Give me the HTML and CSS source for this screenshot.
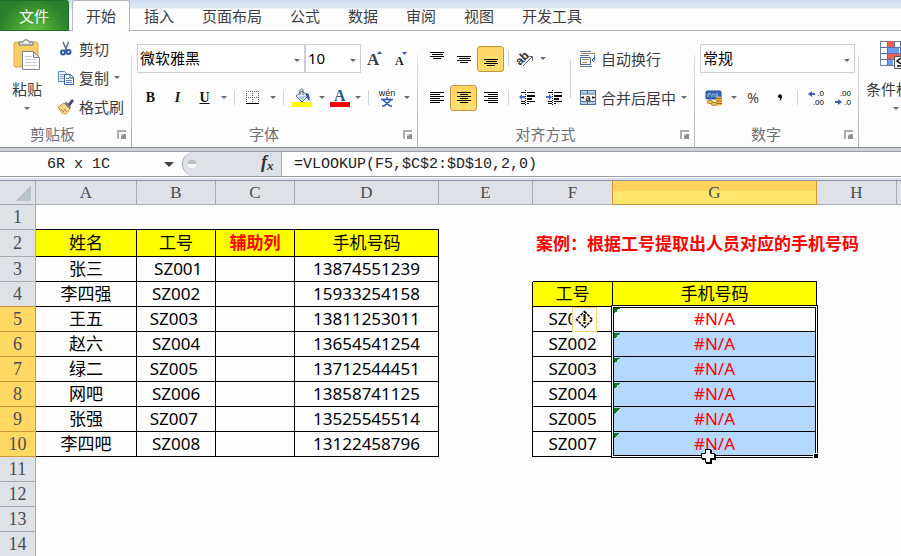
FILE: index.html
```html
<!DOCTYPE html>
<html lang="zh-CN">
<head>
<meta charset="utf-8">
<title>工作簿</title>
<link rel="stylesheet" href="styles.css">
</head>
<body>
<nav class="tabs">
  <button class="tab tab-file">文件</button>
  <button class="tab tab-active">开始</button>
  <button class="tab">插入</button>
  <button class="tab">页面布局</button>
  <button class="tab">公式</button>
  <button class="tab">数据</button>
  <button class="tab">审阅</button>
  <button class="tab">视图</button>
  <button class="tab">开发工具</button>
</nav>

<div class="ribbon">
  <section class="group g-clip">
    <div class="group-body">
      <button class="big">
        <svg width="28" height="32" viewBox="0 0 28 32"><rect x="1" y="3" width="24" height="25" rx="2" fill="#f7cf62" stroke="#dba94a"/><path d="M6 6V3h4c0-3 6-3 6 0h4v3z" fill="#d6dade" stroke="#6d7580"/><path d="M11 3.500h4" stroke="#fff" stroke-width="2"/><path d="M9.500 12.500h11l6 6v12h-17z" fill="#fff" stroke="#7a8696"/><path d="M20.500 12.500v6h6z" fill="#dde3ea" stroke="#7a8696"/><path d="M12 17.500h7M12 20.500h11M12 23.500h12M12 26.500h12" stroke="#c4ccd6"/></svg>
        <span>粘贴</span>
        <i class="arrow"></i>
      </button>
      <div class="clip-list">
        <button class="cmd"><svg width="16" height="16" viewBox="0 0 16 16"><path d="M5 1l4 9M10.500 1L7 10" stroke="#5b6b80" stroke-width="1.500" fill="none"/><circle cx="5" cy="11.500" r="2" fill="#fff" stroke="#2c5aa8" stroke-width="2"/><circle cx="10.500" cy="11" r="2" fill="#fff" stroke="#2c5aa8" stroke-width="2"/></svg>剪切</button>
        <button class="cmd"><svg width="16" height="16" viewBox="0 0 16 16"><path d="M.5 1.500h6l3 3v7h-9z" fill="#e8f0fb" stroke="#5f86bd"/><path d="M2 4.500h4M2 6.500h5M2 8.500h5" stroke="#7fa3d6"/><path d="M6.500 4.500h6l3 3v7h-9z" fill="#fff" stroke="#2f5fa8"/><path d="M12 4.500v3.500h3.500" fill="none" stroke="#2f5fa8"/><path d="M8 8.500h3M8 10.500h6M8 12.500h6" stroke="#5585cc"/></svg>复制<i class="arrow"></i></button>
        <button class="cmd"><svg width="16" height="16" viewBox="0 0 16 16"><path d="M0 8l6-4 6 6-4 5-4-1z" fill="#f6d68c" stroke="#d39b45"/><path d="M3 10l3 3M6 10l3 3" stroke="#b9772c"/><path d="M6 4l3-1 4 5-1 2z" fill="#71788a"/><path d="M10 5l4-5 2 2-4 5z" fill="#4b4463"/></svg>格式刷</button>
      </div>
    </div>
    <footer class="caption"><span>剪贴板</span><button class="launch" aria-label="剪贴板设置"></button></footer>
  </section>

  <section class="group g-font">
    <div class="group-body rows">
      <div class="row">
        <label class="combo combo-font"><select aria-label="字体"><option>微软雅黑</option></select></label>
        <label class="combo combo-size"><select aria-label="字号"><option>10</option></select></label>
        <button class="tool w28" aria-label="增大字号"><svg width="16" height="18" viewBox="0 0 16 18"><text x="0" y="15" class="serif-bold" font-size="17" fill="#3b3d42">A</text><path d="M10 4l2.500-3L15 4z" fill="#2c5aa8"/></svg></button>
        <button class="tool w24" aria-label="减小字号"><svg width="16" height="18" viewBox="0 0 16 18"><text x="2" y="15" class="serif-bold" font-size="12" fill="#202124">A</text><path d="M9 2h5l-2.500 3z" fill="#2c5aa8"/></svg></button>
      </div>
      <div class="row">
        <button class="tool w27 letter bold">B</button>
        <button class="tool w27 letter italic">I</button>
        <button class="tool w27 letter under">U</button>
        <button class="drop" aria-label="下划线选项"><i class="arrow"></i></button>
        <i class="sep"></i>
        <button class="tool w28" aria-label="边框"><svg width="14" height="14" viewBox="0 0 14 14"><path d="M0 .5h13M0 6.500h13M.5 0v12M6.500 0v12M12.500 0v12" stroke="#666" stroke-dasharray="1 1"/><path d="M0 12.500h13" stroke="#000"/></svg></button>
        <button class="drop" aria-label="边框选项"><i class="arrow"></i></button>
        <i class="sep"></i>
        <button class="tool w28" aria-label="填充颜色"><svg width="20" height="18" viewBox="0 0 20 18"><path d="M4 7l6-5 6 5-6 6z" fill="#e4ebf5" stroke="#4d6690"/><path d="M6 8l4 3 4-4z" fill="#a8bedd"/><path d="M8 6V1.500c0-2 3-2 3 0V6" fill="none" stroke="#555c68"/><path d="M14 4c3 0 4 3 3.500 8-2-1-2-4-3.500-5z" fill="#2c5aa8"/><rect y="13" width="20" height="5" fill="#ff0"/></svg></button>
        <button class="drop" aria-label="填充选项"><i class="arrow"></i></button>
        <button class="tool w24" aria-label="字体颜色"><svg width="20" height="18" viewBox="0 0 20 18"><text x="4" y="12" class="serif-bold" font-size="16" fill="#35588f">A</text><rect y="13" width="20" height="5" fill="#f00"/></svg></button>
        <button class="drop" aria-label="字体颜色选项"><i class="arrow"></i></button>
        <i class="sep"></i>
        <button class="tool w28" aria-label="拼音"><svg width="18" height="18" viewBox="0 0 18 18"><text x="9" y="7" text-anchor="middle" class="sans" font-size="9" fill="#222">wén</text><path d="M3 10.500h12M9 8v2M5 11l7 6h2M13 11l-7 6H4" stroke="#2855b5" stroke-width="1.500" fill="none"/></svg></button>
        <button class="drop" aria-label="拼音选项"><i class="arrow"></i></button>
      </div>
    </div>
    <footer class="caption"><span>字体</span><button class="launch" aria-label="字体设置"></button></footer>
  </section>

  <section class="group g-align">
    <div class="group-body">
      <div class="rows align-left">
        <div class="row">
          <button class="tool w27" aria-label="顶端对齐"><svg width="14" height="16" viewBox="0 0 14 16"><path d="M0 1.500h14M2 3.500h11M0 5.500h14M3 7.500h8" stroke="#000"/></svg></button>
          <button class="tool w27" aria-label="垂直居中"><svg width="14" height="16" viewBox="0 0 14 16"><path d="M0 5.500h14M2 7.500h11M0 9.500h14M3 11.500h8" stroke="#000"/></svg></button>
          <button class="tool w27 on" aria-label="底端对齐"><svg width="14" height="16" viewBox="0 0 14 16"><path d="M0 8.500h14M2 10.500h11M0 12.500h14M3 14.500h8" stroke="#000"/></svg></button>
          <i class="sep"></i>
          <button class="tool w24" aria-label="方向"><svg width="18" height="16" viewBox="0 0 18 16"><text x="1" y="12" transform="rotate(-45 6 10)" class="sans-bold" font-size="12" fill="#333">ab</text><path d="M7 15l9-9M12 5.500h4.500V10" stroke="#666070" fill="none"/></svg></button>
          <button class="drop" aria-label="方向选项"><i class="arrow"></i></button>
        </div>
        <div class="row">
          <button class="tool w27" aria-label="左对齐"><svg width="14" height="12" viewBox="0 0 14 12"><path d="M0 .5h14M0 2.500h10M0 4.500h14M0 6.500h10M0 8.500h14M0 10.500h10" stroke="#000"/></svg></button>
          <button class="tool w27 on" aria-label="居中"><svg width="14" height="12" viewBox="0 0 14 12"><path d="M0 .5h14M3 2.500h8M0 4.500h14M3 6.500h8M0 8.500h14M3 10.500h8" stroke="#000"/></svg></button>
          <button class="tool w27" aria-label="右对齐"><svg width="14" height="12" viewBox="0 0 14 12"><path d="M0 .5h14M4 2.500h10M0 4.500h14M4 6.500h10M0 8.500h14M4 10.500h10" stroke="#000"/></svg></button>
          <i class="sep"></i>
          <button class="tool w27" aria-label="减少缩进"><svg width="16" height="16" viewBox="0 0 16 16"><path d="M2 2.500h4M8 2.500h8M2 11.500h4M8 11.500h8M2 13.500h4M8 13.500h2" stroke="#000"/><path d="M8 6h8M8 9h5" stroke="#000" stroke-width="2"/><path d="M6.500 0v16" stroke="#000" stroke-dasharray="1 1"/><path d="M0 7l3-3v2h3v2H3v2z" fill="#3f72c4"/></svg></button>
          <button class="tool w27" aria-label="增加缩进"><svg width="16" height="16" viewBox="0 0 16 16"><path d="M2 2.500h4M8 2.500h8M2 11.500h4M8 11.500h8M2 13.500h4M8 13.500h2" stroke="#000"/><path d="M8 6h8M8 9h5" stroke="#000" stroke-width="2"/><path d="M6.500 0v16" stroke="#000" stroke-dasharray="1 1"/><path d="M6 7L3 4v2H0v2h3v2z" fill="#3f72c4"/></svg></button>
        </div>
      </div>
      <i class="tall-sep"></i>
      <div class="rows">
        <button class="cmd row"><svg width="16" height="16" viewBox="0 0 16 16"><path d="M0 .5h11M0 4.500h9M0 15.500h12" stroke="#607590"/><path d="M1 2.500h14" stroke="#a98149"/><rect x=".5" y="6.500" width="10" height="7" fill="#fff" stroke="#536b8e"/><path d="M2 8.500h7M2 11.500h5" stroke="#b3874b"/><path d="M14.500 4v5h-2M14 7l-2 2 2 2" fill="none" stroke="#3f68a8"/></svg>自动换行</button>
        <button class="cmd row"><svg width="16" height="16" viewBox="0 0 16 16"><rect x=".5" y=".5" width="15" height="14" fill="#b9d0ea" stroke="#4f6d99"/><path d="M7.500 0v15" stroke="#4f6d99"/><rect x="1" y="4" width="14" height="7" fill="#fff"/><path d="M0 4h16M0 11.500h16" stroke="#4f6d99"/><text x="8" y="11" text-anchor="middle" class="sans-bold" font-size="9" fill="#111">a</text><path d="M1 7.500h3M12 7.500h3M3 6v3M13 6v3" stroke="#222"/></svg>合并后居中<i class="arrow"></i></button>
      </div>
    </div>
    <footer class="caption"><span>对齐方式</span><button class="launch" aria-label="对齐设置"></button></footer>
  </section>

  <section class="group g-num">
    <div class="group-body rows">
      <div class="row">
        <label class="combo combo-num"><select aria-label="数字格式"><option>常规</option></select></label>
      </div>
      <div class="row">
        <button class="tool w28" aria-label="会计数字格式"><svg width="18" height="16" viewBox="0 0 18 16"><rect x="1" y="1" width="15" height="8" rx="1" fill="#3968b8" stroke="#244b92"/><path d="M3 7V4h3M7 7c-1-4 4-4 3 0M12 3v4h2" stroke="#b6cef2" fill="none"/><path d="M11 8c2-2 6-1 6 0v6c0 2-6 2-6 0z" fill="#efb73f"/><path d="M11 8.500h6M11 11h6M11 13.500h6" stroke="#9d6818"/><ellipse cx="5" cy="12" rx="3" ry="1.500" fill="#f2c45b" stroke="#b88127"/><ellipse cx="9" cy="14" rx="3" ry="1.500" fill="#f2c45b" stroke="#b88127"/></svg></button>
        <button class="drop" aria-label="货币选项"><i class="arrow"></i></button>
        <button class="tool w26 percent">%</button>
        <button class="tool w27" aria-label="千位分隔"><svg width="8" height="10" viewBox="0 0 8 10"><path d="M2 3.500a2 2 0 1 1 4-.5c0 3-1 4-3 5 1-1 1-2 1-3-1 0-2 0-2-1.500z" fill="#111"/></svg></button>
        <i class="sep"></i>
        <button class="tool w27" aria-label="增加小数位数"><svg width="16" height="18" viewBox="0 0 16 18"><text x="16" y="7" text-anchor="end" class="sans" font-size="8" fill="#000">.0</text><text x="16" y="16" text-anchor="end" class="sans" font-size="8" fill="#000">.00</text><path d="M0 5l4-3v2h3v2H4v2z" fill="#2f62bd"/></svg></button>
        <button class="tool w27" aria-label="减少小数位数"><svg width="16" height="18" viewBox="0 0 16 18"><text x="16" y="7" text-anchor="end" class="sans" font-size="8" fill="#000">.00</text><text x="16" y="16" text-anchor="end" class="sans" font-size="8" fill="#000">.0</text><path d="M7 13l-4-3v2H0v2h3v2z" fill="#2f62bd"/></svg></button>
      </div>
    </div>
    <footer class="caption"><span>数字</span><button class="launch" aria-label="数字设置"></button></footer>
  </section>

  <section class="group g-style">
    <div class="group-body">
      <button class="big">
        <svg width="32" height="32" viewBox="0 0 32 32"><path d="M.5 2.500h30v24H.5z" fill="#fff" stroke="#6d7fa8"/><path d="M7 2h7v6H7zM7 14h14v6H7z" fill="#f4604c"/><path d="M7 8h12v6H7zM7 20h6v6H7z" fill="#6d9bf0"/><path d="M0 8.500h30M0 14.500h30M0 20.500h30M7.500 2v25M14.500 2v6M20.500 2v25" stroke="#5a6ea5"/><path d="M14.500 17.500h14v12h-14z" fill="#f2f3f5" stroke="#555"/><path d="M21 19l-4 3 4 3M17 27h5" fill="none" stroke="#111" stroke-width="1.500"/></svg>
        <span>条件格式</span>
        <i class="arrow"></i>
      </button>
    </div>
  </section>
</div>

<div class="formula-bar">
  <label class="name-box"><input class="mono" aria-label="名称框" value="6R x 1C"></label>
  <div class="fx-area">
    <i class="grip"></i>
    <button class="fx" aria-label="插入函数"><svg width="18" height="20" viewBox="0 0 18 20"><text x="3" y="14" class="serif-italic" font-size="18" fill="#333">f</text><text x="9" y="16" class="serif-italic" font-size="13" fill="#333">x</text></svg></button>
  </div>
  <input class="formula mono" aria-label="编辑栏" value="=VLOOKUP(F5,$C$2:$D$10,2,0)">
</div>

<table class="sheet">
  <colgroup><col class="c-head"><col class="c-a"><col class="c-b"><col class="c-b"><col class="c-d"><col class="c-e"><col class="c-f"><col class="c-g"><col class="c-f"><col></colgroup>
  <thead>
    <tr><th class="corner"></th><th>A</th><th>B</th><th>C</th><th>D</th><th>E</th><th>F</th><th class="sel">G</th><th>H</th><th class="last"></th></tr>
  </thead>
  <tbody>
    <tr><th>1</th><td class="u"></td><td class="u"></td><td class="u"></td><td class="u"></td><td></td><td></td><td></td><td></td><td></td></tr>
    <tr class="tall"><th>2</th><td class="b y">姓名</td><td class="b y">工号</td><td class="b y key">辅助列</td><td class="b y">手机号码</td><td></td><td class="title" colspan="4">案例<span class="colon">：</span>根据工号提取出人员对应的手机号码</td></tr>
    <tr><th>3</th><td class="b">张三</td><td class="b"> SZ001</td><td class="b"></td><td class="b">13874551239</td><td></td><td class="u"></td><td class="u"></td><td></td><td></td></tr>
    <tr><th class="pre">4</th><td class="b">李四强</td><td class="b">SZ002</td><td class="b"></td><td class="b">15933254158</td><td class="r"></td><td class="b y">工号</td><td class="b y">手机号码</td><td></td><td></td></tr>
    <tr><th class="sel">5</th><td class="b">王五</td><td class="b">SZ003 </td><td class="b"></td><td class="b">13811253011</td><td class="r"></td><td class="b anchor">SZ001<span class="tag"><svg width="19" height="19" viewBox="0 0 19 19"><path d="M9.500 1L18 9.500 9.500 18 1 9.500z" fill="#fff"/><path d="M6 6.500h7M4 8.500h11M4 10.500h11M6 12.500h7" stroke="#fdf08a"/><path d="M9.500 1.500l8 8-8 8-8-8z" fill="none" stroke="#000" stroke-width="1.500" stroke-dasharray="3 1"/><path d="M9.500 4v7M9.500 12v2" stroke="#000" stroke-width="2"/></svg></span></td><td class="b err anchor">#N/A<span class="selection"><i class="handle"></i></span></td><td></td><td></td></tr>
    <tr><th class="sel">6</th><td class="b">赵六</td><td class="b">SZ004</td><td class="b"></td><td class="b">13654541254</td><td class="r"></td><td class="b">SZ002</td><td class="b err picked">#N/A</td><td></td><td></td></tr>
    <tr><th class="sel">7</th><td class="b">绿二</td><td class="b">SZ005 </td><td class="b"></td><td class="b">13712544451</td><td class="r"></td><td class="b">SZ003</td><td class="b err picked">#N/A</td><td></td><td></td></tr>
    <tr><th class="sel">8</th><td class="b">网吧</td><td class="b">SZ006</td><td class="b"></td><td class="b">13858741125</td><td class="r"></td><td class="b">SZ004</td><td class="b err picked">#N/A</td><td></td><td></td></tr>
    <tr><th class="sel">9</th><td class="b">张强</td><td class="b">SZ007 </td><td class="b"></td><td class="b">13525545514</td><td class="r"></td><td class="b">SZ005</td><td class="b err picked">#N/A</td><td></td><td></td></tr>
    <tr><th class="sel">10</th><td class="b">李四吧</td><td class="b">SZ008</td><td class="b"></td><td class="b">13122458796</td><td class="r"></td><td class="b">SZ007</td><td class="b err picked anchor">#N/A<svg class="cursor" width="16" height="16" viewBox="0 0 16 16"><path d="M6 2h6v4h4v6h-4v4H6v-4H2V6h4z" fill="#000"/><path d="M5.500 1.500h5v4h4v5h-4v4h-5v-4h-4v-5h4z" fill="#fff" stroke="#000"/></svg></td><td></td><td></td></tr>
    <tr><th>11</th><td colspan="9"></td></tr>
    <tr><th>12</th><td colspan="9"></td></tr>
    <tr><th>13</th><td colspan="9"></td></tr>
    <tr><th>14</th><td colspan="9"></td></tr>
  </tbody>
</table>
</body>
</html>
```
FILE: styles.css
```css
* {
  box-sizing: border-box;
}

body {
  margin: 0;
  overflow: hidden;
  background: #fdfdfd;
  color: #3b3d42;
  font: 15px/20px "Noto Sans", "Noto Sans CJK SC", sans-serif;
}

button,
input,
select {
  margin: 0;
  padding: 0;
  border: 0;
  background: none;
  color: inherit;
  font: inherit;
}

svg {
  display: block;
  flex: none;
  overflow: visible;
}

.serif-bold {
  font-family: "Liberation Serif", serif;
  font-weight: bold;
}

.serif-italic {
  font-family: "Liberation Serif", serif;
  font-style: italic;
  font-weight: bold;
}

.sans {
  font-family: "Liberation Sans", sans-serif;
}

.sans-bold {
  font-family: "Liberation Sans", sans-serif;
  font-weight: bold;
}

/* Tabs */
.tabs {
  display: flex;
  height: 31px;
  background: linear-gradient(#c9d9ee 0, #dbe6f5 4px, #dbe6f5 8px, #fdfdfd 9px);
  box-shadow: inset 0 -1px #adb1b9;
}

.tab {
  padding: 0 14px;
  white-space: nowrap;
}

.tab-file {
  width: 69px;
  border: 1px solid #1f6e2c;
  border-left: 0;
  border-radius: 0 3px 0 0;
  background: radial-gradient(ellipse at 50% 110%, #6cc043 0, #3f9a30 45%, #2a7f2c 75%);
  color: #fff;
}

.tab-active {
  margin-left: 3px;
  border: 1px solid #b3b7c0;
  border-bottom: 0;
  border-radius: 3px 3px 0 0;
  padding: 0 13px;
  background: #fdfdfd;
}

/* Ribbon */
.ribbon {
  display: flex;
  height: 117px;
  border-bottom: 1px solid #8b8f94;
  overflow: hidden;
}

.group {
  display: flex;
  flex: none;
  flex-direction: column;
  padding-right: 1px;
  background: linear-gradient(#dcdfe4, #a4a8ae) right 24px / 1px 100% no-repeat;
}

.g-clip {
  width: 132px;
}

.g-font {
  width: 286px;
  padding-left: 5px;
}

.g-align {
  width: 277px;
  padding-left: 5px;
}

.g-num {
  width: 164px;
  padding-left: 5px;
}

.g-style {
  flex: 1 0 auto;
  padding-left: 7px;
  background: none;
}

.group-body {
  display: flex;
  flex: 1;
}

.rows {
  display: flex;
  flex-direction: column;
  gap: 10px;
  padding-top: 13px;
}

.row {
  display: flex;
  align-items: center;
  height: 29px;
}

.caption {
  position: relative;
  height: 24px;
  color: #6b6f76;
  line-height: 22px;
  text-align: center;
}

.caption span {
  padding-right: 26px;
}

.launch {
  position: absolute;
  right: 5px;
  top: 7px;
  width: 9px;
  height: 9px;
  border-top: 2px solid #a9adb3;
  border-left: 2px solid #a9adb3;
}

.launch::after {
  content: "";
  position: absolute;
  right: 0;
  bottom: 0;
  width: 5px;
  height: 5px;
  background: linear-gradient(135deg, #c4c7cb 30%, #8b8f96 30%);
}

.arrow {
  width: 0;
  height: 0;
  border: 3px solid transparent;
  border-top-color: #666a70;
  border-bottom: 0;
}

.big {
  display: flex;
  flex-direction: column;
  align-items: center;
  padding: 8px 0 0 12px;
  width: 42px;
  height: 91px;
}

.big svg {
  margin-bottom: 8px;
}

.big .arrow {
  margin-top: 8px;
}

.g-style .big {
  width: auto;
  padding: 8px 0 0;
  white-space: nowrap;
}

.clip-list {
  display: flex;
  flex-direction: column;
  padding: 3px 0 0 16px;
}

.cmd {
  display: flex;
  align-items: center;
  gap: 5px;
  height: 29px;
  white-space: nowrap;
}

.tall-sep {
  width: 1px;
  height: 38px;
  margin: 29px 9px 0 3px;
  background: #cdd3dc;
}

.combo {
  position: relative;
  height: 29px;
  border: 1px solid #cbced4;
  background: #fff;
}

.combo::after {
  content: "";
  position: absolute;
  right: 4px;
  top: 14px;
  border: 3px solid transparent;
  border-top-color: #666a70;
  border-bottom: 0;
}

.combo select {
  width: 100%;
  height: 27px;
  padding: 0 2px 2px;
  appearance: none;
  color: #000;
}

.combo-font {
  width: 168px;
}

.combo-size {
  width: 56px;
}

.combo-num {
  width: 155px;
}

.tool {
  display: flex;
  align-items: center;
  justify-content: center;
  height: 26px;
}

.w24 {
  width: 24px;
}

.w26 {
  width: 26px;
}

.w27 {
  width: 27px;
}

.w28 {
  width: 28px;
}

.on {
  border: 1px solid #c8913a;
  border-radius: 3px;
  background: linear-gradient(#fcd565, #ffdf6e);
}

.drop {
  display: flex;
  align-items: center;
  justify-content: center;
  width: 12px;
  height: 26px;
}

.sep {
  width: 1px;
  height: 15px;
  margin: 0 4px;
  background: #ced3da;
}

.letter {
  color: #111;
  font: bold 14px/20px "Liberation Serif", serif;
}

.italic {
  font-style: italic;
}

.under {
  text-decoration: underline;
}

.percent {
  font-size: 14px;
}

/* Formula bar */
.formula-bar {
  display: flex;
  height: 33px;
  padding-top: 1px;
  border-bottom: 1px solid #8f9399;
  background: linear-gradient(#cdd0d5 3px, #999da3 3px, #999da3 4px, #fdfdfd 4px, #fdfdfd 28px, #999da3 28px, #999da3 29px, #fdfdfd 29px, #fdfdfd 30px, #d9e3f3 30px);
}

.mono {
  color: #222;
  font-family: "Liberation Mono", monospace;
}

.name-box {
  position: relative;
  width: 182px;
  height: 24px;
  margin-top: 3px;
}

.name-box input {
  width: 100%;
  height: 24px;
  padding-left: 47px;
}

.name-box::after {
  content: "";
  position: absolute;
  right: 8px;
  top: 10px;
  border: 5px solid transparent;
  border-top-color: #3d4045;
  border-bottom: 0;
}

.fx-area {
  display: flex;
  align-items: center;
  justify-content: space-between;
  width: 100px;
  height: 24px;
  margin-top: 3px;
  padding: 0 5px;
  border: solid #a6aab0;
  border-width: 0 1px;
  border-radius: 12px 0 0 12px;
  background: #dee1e6;
}

.grip {
  width: 8px;
  height: 8px;
  border-radius: 3px;
  background: linear-gradient(#b7bbc1 50%, #fff 50%);
}

.formula {
  flex: 1;
  height: 24px;
  margin-top: 3px;
  padding-left: 12px;
}

/* Worksheet */
.sheet {
  width: 100%;
  table-layout: fixed;
  border-collapse: separate;
  border-spacing: 0;
  color: #000;
  font-size: 17px;
  line-height: 22px;
}

.c-head {
  width: 36px;
}

.c-a {
  width: 101px;
}

.c-b {
  width: 79px;
}

.c-d {
  width: 144px;
}

.c-e {
  width: 94px;
}

.c-f {
  width: 80px;
}

.c-g {
  width: 204px;
}

.sheet tr {
  height: 25px;
}

.sheet thead tr {
  height: 24px;
}

.sheet .tall {
  height: 27px;
}

.sheet th {
  padding: 0;
  border: solid #a6abb2;
  border-width: 0 1px 1px 0;
  background: #dee1e6;
  color: #4a4c51;
  font: 18px/22px "Liberation Serif", serif;
}

.sheet thead th {
  padding-top: 1px;
  font-size: 17px;
}

.sheet .last {
  border-right: 0;
}

.sheet .corner {
  background: linear-gradient(135deg, transparent 50%, #b9c4c6 50%) 16px 5px / 15px 15px no-repeat #dee1e6;
}

.sheet .sel {
  border-color: #cf9339;
  background: #ffd963;
}

.sheet .pre {
  border-bottom-color: #cf9339;
}

.sheet thead .sel {
  background: linear-gradient(#ffd25b 10px, #ffe56c 10px);
  box-shadow: -1px 0 #cf9339;
}

.sheet td {
  padding: 0;
  text-align: center;
  white-space: pre;
}

.sheet .b {
  border: solid #000;
  border-width: 0 1px 1px 0;
}

.sheet .u {
  border-bottom: 1px solid #000;
}

.sheet .r {
  border-right: 1px solid #000;
}

.sheet .y {
  background: #ff0;
}

.sheet .key {
  color: #f00;
  font-weight: bold;
}

.sheet .title {
  padding-left: 3px;
  color: #f00;
  font-weight: bold;
  text-align: left;
}

.colon {
  font-family: "Noto Sans CJK TC", sans-serif;
}

.sheet .err {
  background: linear-gradient(135deg, #0a7d1c 50%, transparent 50%) 1px 1px / 6px 6px no-repeat;
  color: #f00;
}

.sheet .picked {
  background-color: #b5d8ff;
}

.sheet .anchor {
  position: relative;
}

/* Frame that surrounds the six selected cells */
.selection {
  position: absolute;
  z-index: 1;
  left: -2px;
  right: -2px;
  top: -2px;
  height: 153px;
  border: 1px solid #000;
  box-shadow: inset 0 0 0 1px #fff, inset 0 0 0 2px #000;
}

.handle {
  position: absolute;
  right: -2px;
  bottom: -2px;
  width: 6px;
  height: 6px;
  border: 1px solid #fff;
  background: #000;
}

.tag {
  position: absolute;
  z-index: 2;
  left: 39px;
  top: 0;
  display: flex;
  align-items: center;
  justify-content: center;
  width: 25px;
  height: 25px;
  border: 1px solid #ffd070;
  background: #fff;
}

.cursor {
  position: absolute;
  z-index: 3;
  left: 87px;
  top: 16px;
}
```
